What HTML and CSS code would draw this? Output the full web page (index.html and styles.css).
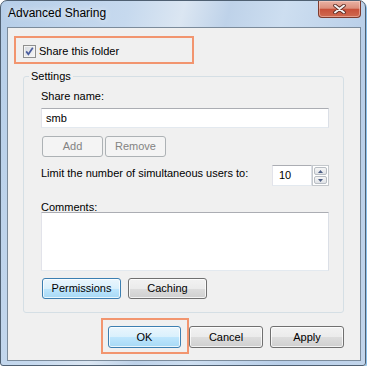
FILE: index.html
```html
<!DOCTYPE html>
<html lang="en">
<head>
    <meta charset="UTF-8">
    <meta name="viewport" content="width=device-width, initial-scale=1.0">
    <title>Advanced Sharing</title>
    <link rel="stylesheet" href="styles.css">
</head>
<body>

    <div class="window">
        <div class="titlebar">
            <span class="title">Advanced Sharing</span>
            <button class="close-btn" aria-label="Close">
                <svg width="13" height="10" viewBox="0 0 13 10">
                    <path d="M2 1.5 L11 8.5 M11 1.5 L2 8.5" stroke="#5a2a22" stroke-width="3.6" stroke-linecap="round"/>
                    <path d="M2 1.5 L11 8.5 M11 1.5 L2 8.5" stroke="#f4f4f4" stroke-width="2" stroke-linecap="round"/>
                </svg>
            </button>
        </div>

        <div class="client">
            <div class="callout share-callout">
                <label class="checkbox">
                    <span class="check-box">
                        <svg width="11" height="11" viewBox="0 0 11 11">
                            <path d="M2.2 5.4 L4.4 8.2 L8.8 1.8" fill="none" stroke="#4a5d9e" stroke-width="1.7"/>
                        </svg>
                    </span>
                    Share this folder
                </label>
            </div>

            <fieldset class="group">
                <legend>Settings</legend>

                <div class="field-label share-label">Share name:</div>
                <div class="textbox">smb</div>

                <div class="btn-row">
                    <button class="btn disabled add-btn">Add</button>
                    <button class="btn disabled remove-btn">Remove</button>
                </div>

                <div class="limit-row">
                    <span class="limit-text">Limit the number of simultaneous users to:</span>
                    <div class="spin">
                        <span class="spin-value">10</span>
                        <div class="spin-btns">
                            <span class="spin-btn">
                                <svg width="5" height="3" viewBox="0 0 5 3"><path d="M2.5 0 L5 3 L0 3 Z" fill="#4d5f86"/></svg>
                            </span>
                            <span class="spin-btn">
                                <svg width="5" height="3" viewBox="0 0 5 3"><path d="M0 0 L5 0 L2.5 3 Z" fill="#4d5f86"/></svg>
                            </span>
                        </div>
                    </div>
                </div>

                <div class="field-label comments-label">Comments:</div>
                <div class="textarea"></div>

                <div class="btn-row wide-row">
                    <button class="btn default wide-btn first-wide">Permissions</button>
                    <button class="btn wide-btn">Caching</button>
                </div>
            </fieldset>

            <div class="footer">
                <div class="callout ok-callout">
                    <button class="btn default dialog-btn ok-btn">OK</button>
                </div>
                <button class="btn dialog-btn cancel-btn">Cancel</button>
                <button class="btn dialog-btn apply-btn">Apply</button>
            </div>
        </div>
    </div>

</body>
</html>
```

FILE: styles.css
```css
* {
    box-sizing: border-box;
}
body {
    margin: 0;
    background-color: #ffffff;
    font-family: "Liberation Sans", Arial, sans-serif;
    font-size: 11px;
    color: #000;
}
.window {
    width: 366px;
    height: 366px;
    border: 1px solid #4f6072;
    border-radius: 7px 7px 3px 3px;
    padding: 0 4px 4px 6px;
    background: linear-gradient(105deg, #b6cee8 0%, #c6d9ee 28%, #dbe6f2 40%, #bed2e9 50%, #cddef0 62%, #b8cee8 82%, #c2d5eb 100%);
    box-shadow: 1px 1px 0 #8cc0ea;
    display: flex;
    flex-direction: column;
}
.titlebar {
    height: 26px;
    display: flex;
    align-items: flex-start;
}
.title {
    font-size: 12px;
    line-height: 15px;
    padding: 5px 0 0 1px;
    text-shadow: 0 0 6px rgba(255, 255, 255, 0.9);
}
.close-btn {
    margin-left: auto;
    width: 43px;
    height: 17px;
    padding: 0;
    border: 1px solid #7d3b2e;
    border-top: none;
    border-radius: 0 0 4px 4px;
    background: linear-gradient(#e9b2a4 0%, #dc8f7c 45%, #c8513a 52%, #cf6a50 100%);
    box-shadow: inset 0 0 0 1px rgba(255, 220, 210, 0.45);
    display: flex;
    align-items: center;
    justify-content: center;
}
.client {
    height: 334px;
    border: 1px solid #7b8b9b;
    background-color: #f0f0f0;
    display: flex;
    flex-direction: column;
    align-items: flex-start;
}
.callout {
    border: 2px solid #f2956f;
}
.share-callout {
    margin: 8px 0 0 6px;
    width: 180px;
    height: 28px;
    padding: 7px 0 0 7px;
}
.checkbox {
    display: flex;
    align-items: center;
    line-height: 13px;
}
.check-box {
    width: 13px;
    height: 13px;
    margin-right: 3px;
    border: 1px solid #8e8f8f;
    background: linear-gradient(135deg, #d6dae0, #f7f7f7);
    box-shadow: inset 0 0 0 1px #f4f4f4;
    display: flex;
    align-items: center;
    justify-content: center;
}
.group {
    margin: 6px 0 0 15px;
    width: 321px;
    border: 1px solid #d5dfe5;
    border-radius: 3px;
    padding: 0 14px 13px 17px;
}
.group legend {
    margin-left: -12px;
    padding: 0 2px;
    line-height: 13px;
}
.field-label {
    line-height: 10px;
}
.share-label {
    margin-top: 8px;
}
.comments-label {
    margin-top: 16px;
}
.textbox {
    margin-top: 7px;
    width: 288px;
    height: 20px;
    border: 1px solid;
    border-color: #abadb3 #dbdfe6 #e3e9ef #e2e3ea;
    background-color: #fff;
    padding-left: 4px;
    line-height: 18px;
}
.textarea {
    width: 288px;
    height: 59px;
    border: 1px solid;
    border-color: #abadb3 #dbdfe6 #e3e9ef #e2e3ea;
    background-color: #fff;
}
.btn-row {
    display: flex;
    margin-top: 8px;
}
.btn {
    font-family: inherit;
    font-size: 11px;
    line-height: 13px;
    color: #000;
    padding: 0;
    border: 1px solid #707070;
    border-radius: 3px;
    background: linear-gradient(#f2f2f2 0%, #ebebeb 50%, #dddddd 50%, #cfcfcf 100%);
    box-shadow: inset 0 0 0 1px rgba(255, 255, 255, 0.75);
}
.btn.default {
    border-color: #3c7fb1;
    background: linear-gradient(#eaf6fd 0%, #d9f0fc 50%, #bee6fd 50%, #a7d9f5 100%);
}
.btn.disabled {
    border-color: #adb2b5;
    background: #f4f4f4;
    color: #838383;
    box-shadow: none;
}
.add-btn,
.remove-btn {
    width: 61px;
    height: 21px;
}
.add-btn {
    margin-left: 1px;
}
.remove-btn {
    margin-left: 2px;
}
.limit-row {
    margin-top: 8px;
    width: 288px;
    display: flex;
    justify-content: space-between;
    align-items: flex-start;
}
.limit-text {
    margin-top: 2px;
    line-height: 13px;
}
.spin {
    display: flex;
    width: 57px;
    height: 21px;
}
.spin-value {
    width: 40px;
    border: 1px solid;
    border-color: #abadb3 #dbdfe6 #e3e9ef #e2e3ea;
    background-color: #fff;
    padding-left: 6px;
    line-height: 19px;
}
.spin-btns {
    width: 17px;
    display: flex;
    flex-direction: column;
    border: 1px solid #c4c8cc;
    background-color: #fff;
    padding: 1px;
    gap: 1px;
}
.spin-btn {
    flex: 1;
    display: flex;
    align-items: center;
    justify-content: center;
    border: 1px solid #b8bdc3;
    border-radius: 2px;
    background: linear-gradient(#f6f6f6, #dfe2e6);
}
.wide-row {
    margin-top: 7px;
}
.wide-btn {
    width: 79px;
    height: 21px;
}
.first-wide {
    margin-left: 1px;
    margin-right: 7px;
}
.footer {
    align-self: stretch;
    margin-top: 5px;
    padding-right: 16px;
    display: flex;
    justify-content: flex-end;
    align-items: flex-start;
}
.ok-callout {
    padding: 6px 6px 4px 5px;
}
.dialog-btn {
    height: 22px;
}
.ok-btn {
    width: 73px;
}
.cancel-btn,
.apply-btn {
    width: 74px;
    margin-top: 8px;
}
.apply-btn {
    margin-left: 7px;
}
```
